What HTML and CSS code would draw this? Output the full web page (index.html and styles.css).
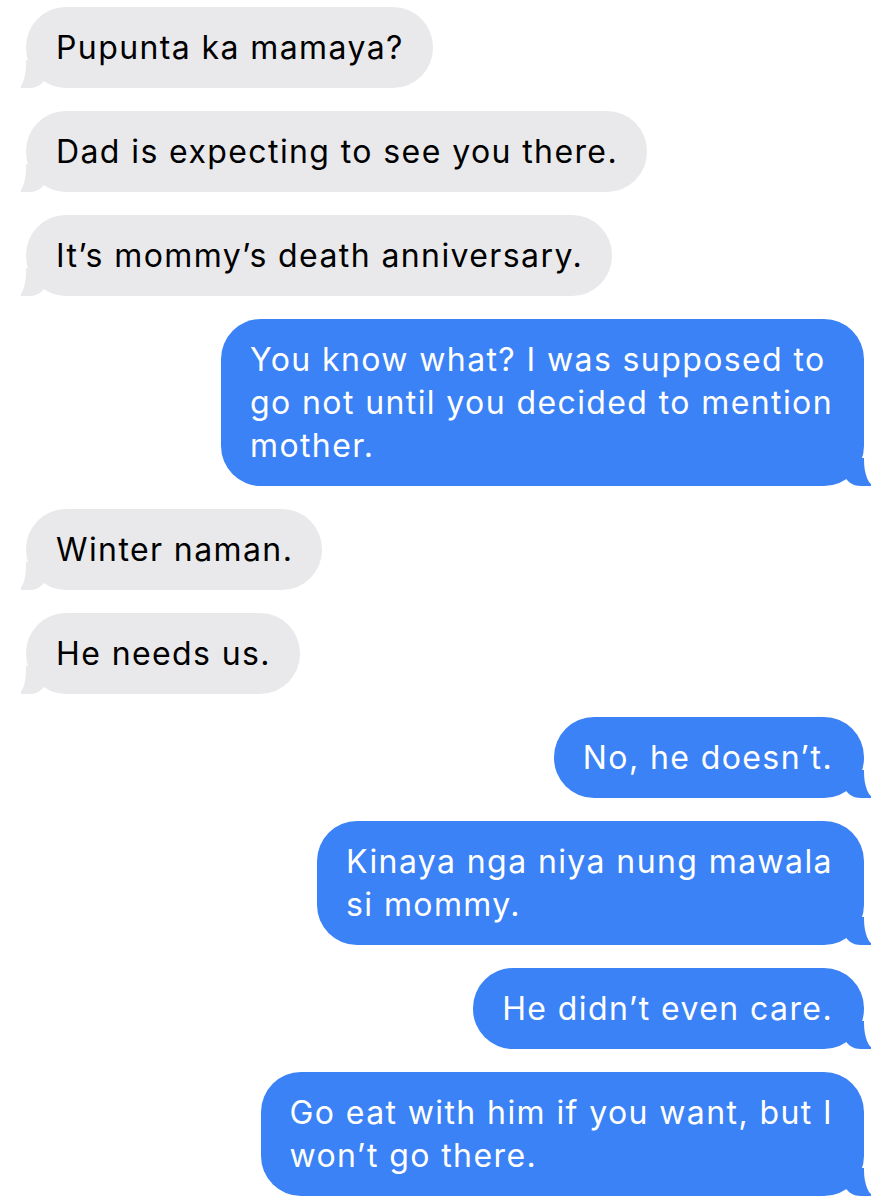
FILE: index.html
```html
<!DOCTYPE html>
<html>
<head>
    <title>Messages</title>
    <link rel="stylesheet" href="styles.css">
</head>
<body>
    <div class="chat">
        <div class="msg them">Pupunta ka mamaya?</div>
        <div class="msg them">Dad is expecting to see you there.</div>
        <div class="msg them">It’s mommy’s death anniversary.</div>
        <div class="msg me">You know what? I was supposed to<br>go not until you decided to mention<br>mother.</div>
        <div class="msg them">Winter naman.</div>
        <div class="msg them">He needs us.</div>
        <div class="msg me">No, he doesn’t.</div>
        <div class="msg me">Kinaya nga niya nung mawala<br>si mommy.</div>
        <div class="msg me">He didn’t even care.</div>
        <div class="msg me">Go eat with him if you want, but I<br>won’t go there.</div>
    </div>
</body>
</html>
```
FILE: styles.css
```css
body {
    margin: 0;
    background-color: #fff;
    font-family: 'Inter', 'Liberation Sans', sans-serif;
}
.chat {
    display: flex;
    flex-direction: column;
    gap: 23px;
    padding: 7px 29px 0 26px;
}
.msg {
    position: relative;
    font-size: 32px;
    line-height: 43px;
    letter-spacing: 1.4px;
    padding: 19px 29px 19px 30px;
    border-radius: 40px;
    white-space: nowrap;
}
.them {
    align-self: flex-start;
    background-color: #e9e9eb;
    color: #000;
}
.me {
    align-self: flex-end;
    padding: 19px 31px 19px 29px;
    background-color: #3b82f6;
    color: #fff;
}
/* tails */
.msg::before,
.msg::after {
    content: "";
    position: absolute;
    bottom: 0;
    height: 28px;
}
.them::before {
    left: -5px;
    width: 24px;
    background-color: #e9e9eb;
    border-bottom-right-radius: 16px 12px;
}
.them::after {
    left: -24px;
    width: 24px;
    background-color: #fff;
    border-bottom-right-radius: 9px 24px;
}
.me::before {
    right: -7px;
    width: 26px;
    background-color: #3b82f6;
    border-bottom-left-radius: 16px 12px;
}
.me::after {
    right: -26px;
    width: 26px;
    background-color: #fff;
    border-bottom-left-radius: 11px 26px;
}
```
